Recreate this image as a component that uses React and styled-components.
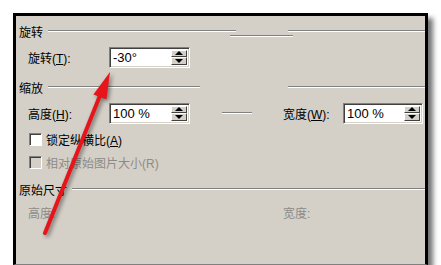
import React from "react";
import styled, { createGlobalStyle } from "styled-components";

const GlobalStyle = createGlobalStyle`
  html, body {
    margin: 0;
    padding: 0;
    background: #ffffff;
    overflow: hidden;
  }
  * { box-sizing: border-box; }
`;

const Page = styled.div`
  position: relative;
  width: 441px;
  height: 265px;
  padding: 13px 0 0 13px;
  font-family: "Liberation Sans", "Noto Sans CJK SC", sans-serif;
  font-size: 12px;
  color: #000;
`;

const Dialog = styled.div`
  width: 415px;
  height: 252px;
  background: #d4d0c8;
  border: 3px solid #000;
  border-bottom: 1px solid #808080;
  box-shadow: 5px 5px 5px rgba(0, 0, 0, 0.55);
  display: flex;
  flex-direction: column;
`;

const Heading = styled.div`
  display: flex;
  align-items: center;
  height: 14px;
  padding-left: 3px;
  margin-top: ${(p) => p.$top}px;
  white-space: nowrap;
`;

const Groove = styled.div`
  height: 2px;
  border-top: 1px solid #808080;
  border-bottom: 1px solid #ffffff;
  margin-left: ${(p) => p.$ml || 0}px;
  width: ${(p) => (p.$w ? `${p.$w}px` : "auto")};
  flex: ${(p) => (p.$w ? "none" : 1)};
  transform: translateY(${(p) => p.$dy || 0}px);
`;

const Row = styled.div`
  display: flex;
  align-items: center;
  height: ${(p) => p.$h || 22}px;
  padding-left: 12px;
  margin-top: ${(p) => p.$top}px;
  white-space: nowrap;
  color: ${(p) => (p.$disabled ? "#8e8b86" : "#000")};
`;

const Label = styled.span`
  width: ${(p) => p.$w}px;
  margin-left: ${(p) => p.$ml || 0}px;
  flex: none;
`;

const Key = styled.span`
  text-decoration: underline;
`;

const Field = styled.div`
  position: relative;
  width: ${(p) => p.$w}px;
  height: 21px;
  flex: none;
  background: #ffffff;
  border: 1px solid;
  border-color: #808080 #ffffff #ffffff #808080;
  box-shadow: inset 1px 1px 0 #404040, inset -1px -1px 0 #d4d0c8;
  display: flex;
  align-items: center;
  padding-left: 3px;
  font-size: 13px;
`;

const Spinner = styled.div`
  position: absolute;
  right: 2px;
  top: 2px;
  bottom: 2px;
  width: 16px;
  display: flex;
  flex-direction: column;
`;

const SpinButton = styled.div`
  flex: 1;
  background: #d4d0c8;
  border: 1px solid;
  border-color: #ffffff #404040 #404040 #ffffff;
  display: flex;
  align-items: center;
  justify-content: center;
  &::after {
    content: "";
    border-left: 4px solid transparent;
    border-right: 4px solid transparent;
    ${(p) =>
      p.$down
        ? "border-top: 4px solid #000;"
        : "border-bottom: 4px solid #000;"}
  }
`;

const Rule = styled.div`
  width: 30px;
  margin-left: 32px;
  height: 2px;
  border-top: 1px solid #808080;
  border-bottom: 1px solid #ffffff;
  flex: none;
`;

const Box = styled.div`
  width: 13px;
  height: 13px;
  margin-left: 1px;
  flex: none;
  background: ${(p) => (p.$disabled ? "#d4d0c8" : "#ffffff")};
  border: 1px solid;
  border-color: #808080 #ffffff #ffffff #808080;
  box-shadow: inset 1px 1px 0 #404040;
`;

const BoxText = styled.span`
  margin-left: 4px;
`;

const Arrow = styled.svg`
  position: absolute;
  left: 0;
  top: 0;
  pointer-events: none;
  filter: drop-shadow(2px 2px 2px rgba(0, 0, 0, 0.45));
`;

function SpinField({ value, width }) {
  return (
    <Field $w={width}>
      {value}
      <Spinner>
        <SpinButton />
        <SpinButton $down />
      </Spinner>
    </Field>
  );
}

export default function App() {
  return (
    <>
      <GlobalStyle />
      <Page>
        <Dialog>
          <Heading $top={8}>
            旋转
            <Groove $ml={5} $w={188} />
            <Groove $ml={-6} $w={63} $dy={5} />
            <Groove $ml={-5} />
          </Heading>
          <Row $top={8}>
            <Label $w={81}>
              旋转(<Key>T</Key>):
            </Label>
            <SpinField value="-30°" width={81} />
          </Row>

          <Heading $top={12}>
            缩放
            <Groove $ml={5} $w={152} />
            <Groove $ml={88} />
          </Heading>
          <Row $top={8}>
            <Label $w={81}>
              高度(<Key>H</Key>):
            </Label>
            <SpinField value="100 %" width={81} />
            <Rule />
            <Label $w={60} $ml={31}>
              宽度(<Key>W</Key>):
            </Label>
            <SpinField value="100 %" width={80} />
          </Row>
          <Row $top={8} $h={14}>
            <Box />
            <BoxText>
              锁定纵横比(<Key>A</Key>)
            </BoxText>
          </Row>
          <Row $top={9} $h={14} $disabled>
            <Box $disabled />
            <BoxText>相对原始图片大小(R)</BoxText>
          </Row>

          <Heading $top={13}>
            原始尺寸
            <Groove $ml={5} />
          </Heading>
          <Row $top={9} $h={14} $disabled>
            <Label $w={255}>高度:</Label>
            <Label $w={60}>宽度:</Label>
          </Row>
        </Dialog>

        <Arrow width="441" height="265" viewBox="0 0 441 265">
          <line
            x1="45"
            y1="233"
            x2="101"
            y2="93"
            stroke="#e8141b"
            strokeWidth="4"
            strokeLinecap="round"
          />
          <polygon points="110,72 106.4,99.6 93.4,94.4" fill="#e8141b" />
        </Arrow>
      </Page>
    </>
  );
}
